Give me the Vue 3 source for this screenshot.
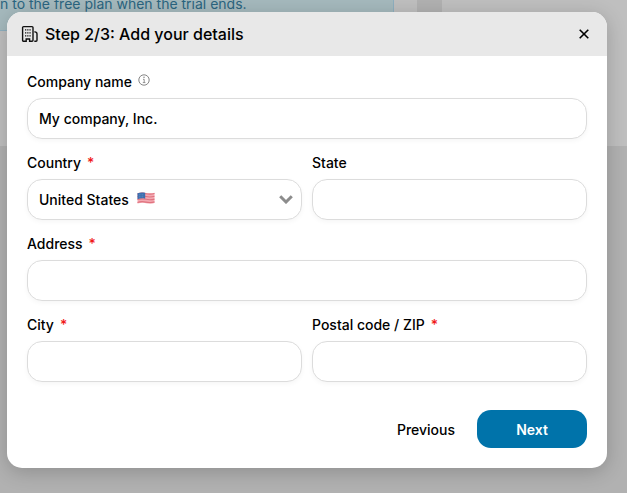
<template>
  <div class="page">
    <div class="plans">
      <div class="panel panel-main">
        <div class="notice">n to the free plan when the trial ends.</div>
      </div>
      <div class="panel panel-side"></div>
    </div>

    <div class="overlay">
      <form class="modal" role="dialog" aria-labelledby="modal-title" @submit.prevent>
        <header class="modal-header">
          <svg class="building" viewBox="0 0 18 18" fill="none" stroke="#111" stroke-width="1.4">
            <path d="M4 16.3H2.600a1 1 0 0 1-1-1V2.600a1 1 0 0 1 1-1h8.400a1 1 0 0 1 1 1v12.700a1 1 0 0 1-1 1H8.600v-2.300H5.200v2.300H4" />
            <path d="M13.300 6.900h.700a2 2 0 0 1 2 2v6.400a1 1 0 0 1-1 1h-1.700" />
            <path d="M4 4.900h1.300M6.200 4.900h1.300M8.400 4.900h1.300M4 7.900h1.300M6.200 7.900h1.300M8.400 7.900h1.300M4 10.900h1.300M6.200 10.900h1.300M8.400 10.900h1.300" />
          </svg>
          <h2 id="modal-title">Step 2/3: Add your details</h2>
          <button type="button" class="close" aria-label="Close">
            <svg viewBox="0 0 10 10" fill="none" stroke="#000" stroke-width="1.6">
              <path d="M.7.7l8.6 8.6M9.3.7L.7 9.3" />
            </svg>
          </button>
        </header>

        <div class="modal-body">
          <div
            v-for="field in fields"
            :key="field.id"
            class="field"
            :class="{ wide: field.wide }"
          >
            <label :for="field.id">
              {{ field.label }}
              <span v-if="field.required" class="required">*</span>
              <svg v-if="field.info" class="info" viewBox="0 0 12 12" fill="none" stroke="#777">
                <circle cx="6" cy="6" r="5.2" stroke-width=".9" />
                <path d="M5 5.300h1.200v3.200M4.800 8.600h2.600" stroke-width=".8" />
                <circle cx="6" cy="3.3" r=".7" fill="#777" stroke="none" />
              </svg>
            </label>

            <div v-if="field.type === 'select'" class="select-wrap">
              <select :id="field.id" v-model="field.value">
                <option>United States</option>
              </select>
              <svg class="flag" viewBox="0 0 18 12">
                <path d="M.5 1.2C4 0 6 .2 9 .9s5.5.6 8.5-.2v10.4c-3 .8-5.5.7-8.5.1s-5-.7-8.5.3z" fill="#f3a9b2" />
                <path
                  d="M.5 2C4 .8 6 1 9 1.7s5.5.6 8.5-.2M.5 4.8C4 3.6 6 3.8 9 4.5s5.5.6 8.5-.2M.5 7.6C4 6.4 6 6.6 9 7.3s5.5.6 8.5-.2M.5 10.4C4 9.2 6 9.4 9 10.1s5.5.6 8.5-.2"
                  fill="none"
                  stroke="#e0737f"
                  stroke-width="1.1"
                />
                <path d="M.5 1.2C3.5.2 5.5.2 8.2.8v5.9C5.5 6.2 3.5 6.2.5 7.2z" fill="#3c6eaf" />
                <path d="M2 2.8h5M2 4.8h5" stroke="#86a7d0" stroke-width=".6" stroke-dasharray=".7 .9" />
              </svg>
              <svg class="chevron" viewBox="0 0 14 9" fill="none" stroke="#8c8c8c" stroke-width="3">
                <path d="M1.2 1.3L7 7l5.8-5.7" />
              </svg>
            </div>
            <input v-else :id="field.id" v-model="field.value" type="text" />
          </div>
        </div>

        <footer class="modal-footer">
          <button type="button" class="previous">Previous</button>
          <button type="submit" class="next">Next</button>
        </footer>
      </form>
    </div>
  </div>
</template>

<script setup>
import { reactive } from "vue";

const fields = reactive([
  { id: "company", label: "Company name", value: "My company, Inc.", wide: true, info: true },
  { id: "country", label: "Country", value: "United States", type: "select", required: true },
  { id: "state", label: "State", value: "" },
  { id: "address", label: "Address", value: "", wide: true, required: true },
  { id: "city", label: "City", value: "", required: true },
  { id: "zip", label: "Postal code / ZIP", value: "", required: true },
]);
</script>

<style>
body {
  margin: 0;
}
</style>

<style scoped>
.page {
  position: relative;
  min-height: 100vh;
  overflow: hidden;
  background: #b1b1b1;
  font-family: Inter, "Liberation Sans", sans-serif;
  font-size: 14px;
  font-weight: 500;
  color: #000;
}

.page *,
.page {
  box-sizing: border-box;
}

.plans {
  display: flex;
  gap: 25px;
  height: 146px;
}

.panel {
  background: #bfbfbf;
}

.panel-main {
  width: 417px;
  padding-right: 23px;
}

.panel-side {
  flex: 1;
}

.notice {
  display: flex;
  height: 31px;
  line-height: 8px;
  font-weight: 400;
  white-space: nowrap;
  color: #2b6580;
  background: #a5b9bd;
  border: 1px solid #8eafbf;
  border-top: 0;
  border-left: 0;
}

/* modal */
.overlay {
  position: absolute;
  inset: 0;
  padding: 12px 20px 25px 7px;
}

.modal {
  margin: 0;
  overflow: hidden;
  background: #fff;
  border-radius: 15px;
  box-shadow: 0 4px 20px rgba(0, 0, 0, 0.2);
}

.modal-header {
  display: flex;
  align-items: center;
  gap: 6px;
  height: 44px;
  padding: 0 16px 0 14px;
  background: #e8e8e8;
}

.building {
  width: 18px;
  height: 18px;
}

h2 {
  flex: 1;
  margin: 0;
  font-size: 16px;
  line-height: 20px;
  font-weight: 500;
}

button {
  padding: 0;
  border: 0;
  background: none;
  font: inherit;
  color: inherit;
  cursor: pointer;
}

.close {
  display: flex;
  padding: 2px;
}

.close svg {
  width: 10px;
  height: 10px;
}

.modal-body {
  display: grid;
  grid-template-columns: 1fr 1fr;
  gap: 14px 10px;
  padding: 16px 20px 0;
}

.field {
  display: flex;
  flex-direction: column;
  gap: 6px;
}

.wide {
  grid-column: 1 / -1;
}

label {
  display: flex;
  gap: 6px;
  line-height: 20px;
}

.required {
  color: #f01818;
}

.info {
  width: 12px;
  height: 12px;
  margin-top: 2px;
}

input,
select {
  width: 100%;
  height: 41px;
  margin: 0;
  padding: 0 11px;
  border: 1px solid #dcdcdc;
  border-radius: 15px;
  background: #fff;
  box-shadow: 0 2px 5px rgba(0, 0, 0, 0.04);
  font: inherit;
  color: inherit;
  outline: none;
}

select {
  display: block;
  appearance: none;
}

.select-wrap {
  position: relative;
}

.flag {
  position: absolute;
  top: 13px;
  left: 110px;
  width: 18px;
  height: 12px;
}

.chevron {
  position: absolute;
  top: 16px;
  right: 9px;
  width: 14px;
  height: 9px;
  pointer-events: none;
}

.modal-footer {
  display: flex;
  justify-content: flex-end;
  gap: 22px;
  padding: 28px 20px 20px;
}

.next {
  width: 110px;
  height: 38px;
  border-radius: 14px;
  background: #0073aa;
  color: #fff;
  font-weight: 600;
}
</style>
